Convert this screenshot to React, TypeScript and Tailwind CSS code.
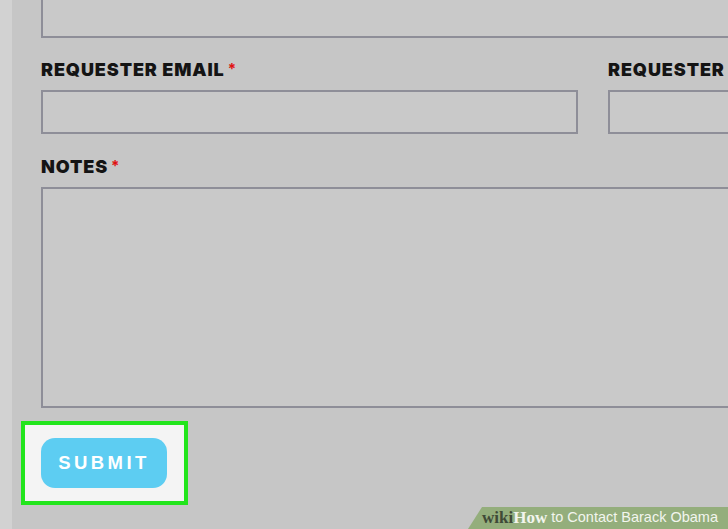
export default function App() {
  return (
    <div className="relative h-[529px] w-[728px] overflow-hidden bg-[#c6c6c6] font-['Inter',sans-serif]">
      <div className="flex h-full">
        <div className="w-[12px] shrink-0 bg-[#d2d2d2]" />
        <div className="flex min-w-0 flex-1 flex-col pl-[29px]">
          <div className="-mt-[10px] h-[48px] w-[720px] shrink-0 border-2 border-[#8e8e98] bg-[#c9c9c9]" />

          <div className="mt-[23px] flex gap-[30px]">
            <div className="flex w-[537px] shrink-0 flex-col">
              <Label text="REQUESTER EMAIL" />
              <div className="mt-[11px] h-[44px] border-2 border-[#8e8e98] bg-[#c9c9c9]" />
            </div>
            <div className="flex w-[300px] shrink-0 flex-col">
              <Label text="REQUESTER" required={false} />
              <div className="mt-[11px] h-[44px] border-2 border-[#8e8e98] bg-[#c9c9c9]" />
            </div>
          </div>

          <div className="mt-[24px]">
            <Label text="NOTES" />
          </div>
          <div className="mt-[11px] h-[221px] w-[720px] shrink-0 border-2 border-[#8e8e98] bg-[#c9c9c9]" />

          <div className="-ml-[20px] mt-[13px] flex h-[84px] w-[167px] items-center border-[4px] border-[#22e51c] bg-[#f4f4f4] pl-[16px]">
            <button className="flex h-[50px] w-[126px] items-center justify-center rounded-[14px] bg-[#5dcdf2] font-['Liberation_Sans',sans-serif] text-[18.5px] font-bold tracking-[3.4px] text-white">
              SUBMIT
            </button>
          </div>
        </div>
      </div>

      <div className="absolute bottom-0 right-0 flex h-[22px] w-[260px] items-center bg-[#94ae7c] pl-[14px] [clip-path:polygon(14px_0,100%_0,100%_100%,0_100%)]">
        <span className="font-['Liberation_Serif',serif] text-[17px] font-bold text-[#3f4a37]">wiki</span>
        <span className="font-['Liberation_Serif',serif] text-[17px] font-bold text-[#f2f5ee]">How</span>
        <span className="ml-[4px] font-['Liberation_Sans',sans-serif] text-[14.5px] text-[#f2f5ee]">to Contact Barack Obama</span>
      </div>
    </div>
  );
}

function Label({ text, required = true }: { text: string; required?: boolean }) {
  return (
    <div className="flex items-start leading-none">
      <span className="text-[18px] font-black tracking-[0.9px] text-[#141414]">{text}</span>
      {required && <span className="ml-[3px] text-[15px] font-bold text-[#e01010]">*</span>}
    </div>
  );
}
